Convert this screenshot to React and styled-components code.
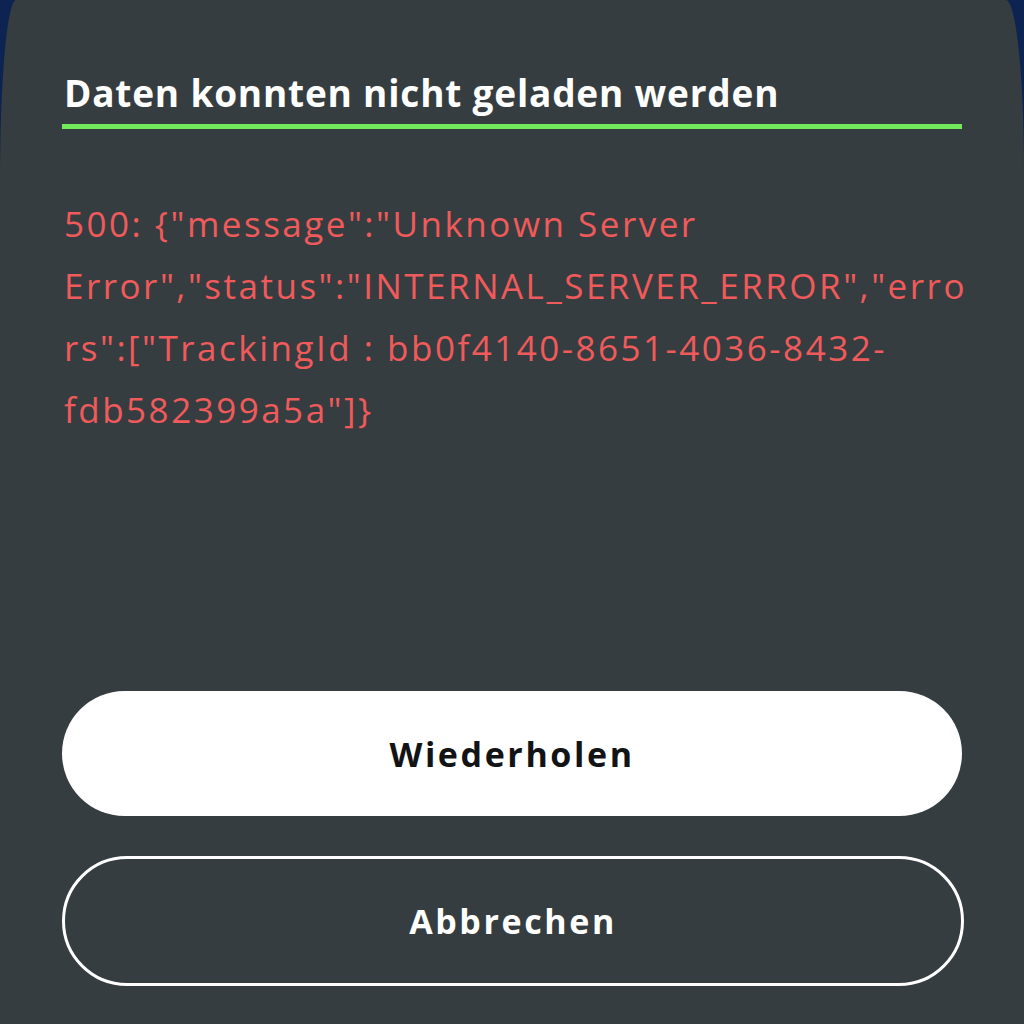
import React from "react";
import styled, { createGlobalStyle } from "styled-components";

const GlobalStyle = createGlobalStyle`
  html, body {
    margin: 0;
    padding: 0;
    background: #0d2352;
  }
  body {
    font-family: "Open Sans", Lato, sans-serif;
  }
`;

const Sheet = styled.div`
  box-sizing: border-box;
  height: 1024px;
  background: #353d40;
  border-radius: 16px 18px 0 0 / 180px 170px 0 0;
  display: flex;
  flex-direction: column;
  padding: 69px 62px 38px 62px;
`;

const Title = styled.h1`
  margin: 0 0 0 2px;
  color: #ffffff;
  font-size: 37px;
  font-weight: 700;
  line-height: 47px;
  letter-spacing: 0.8px;
`;

const Rule = styled.div`
  margin-top: 8px;
  height: 5px;
  background: #73ea5c;
`;

const ErrorText = styled.div`
  margin: 64px 0 0 2px;
  color: #f05a5b;
  font-size: 35px;
  line-height: 62px;
  font-weight: 400;
  letter-spacing: 2.5px;
`;

const Line = styled.span`
  display: block;
  white-space: nowrap;
`;

const Spacer = styled.div`
  flex: 1;
`;

const Actions = styled.div`
  display: flex;
  flex-direction: column;
  gap: 40px;
`;

const Button = styled.button`
  box-sizing: border-box;
  height: ${(p) => (p.$outline ? "130px" : "125px")};
  width: ${(p) => (p.$outline ? "902px" : "900px")};
  border-radius: 999px;
  border: ${(p) => (p.$outline ? "3px solid #ffffff" : "none")};
  background: ${(p) => (p.$outline ? "transparent" : "#ffffff")};
  color: ${(p) => (p.$outline ? "#ffffff" : "#111315")};
  font-family: "Open Sans", Lato, sans-serif;
  font-size: 34px;
  font-weight: 700;
  letter-spacing: 2.6px;
  cursor: pointer;
`;

const lines = [
  '500: {"message":"Unknown Server',
  'Error","status":"INTERNAL_SERVER_ERROR","erro',
  'rs":["TrackingId : bb0f4140-8651-4036-8432-',
  'fdb582399a5a"]}',
];

export default function App() {
  return (
    <>
      <GlobalStyle />
      <Sheet>
        <Title>Daten konnten nicht geladen werden</Title>
        <Rule />
        <ErrorText>
          {lines.map((l) => (
            <Line key={l}>{l}</Line>
          ))}
        </ErrorText>
        <Spacer />
        <Actions>
          <Button>Wiederholen</Button>
          <Button $outline>Abbrechen</Button>
        </Actions>
      </Sheet>
    </>
  );
}
